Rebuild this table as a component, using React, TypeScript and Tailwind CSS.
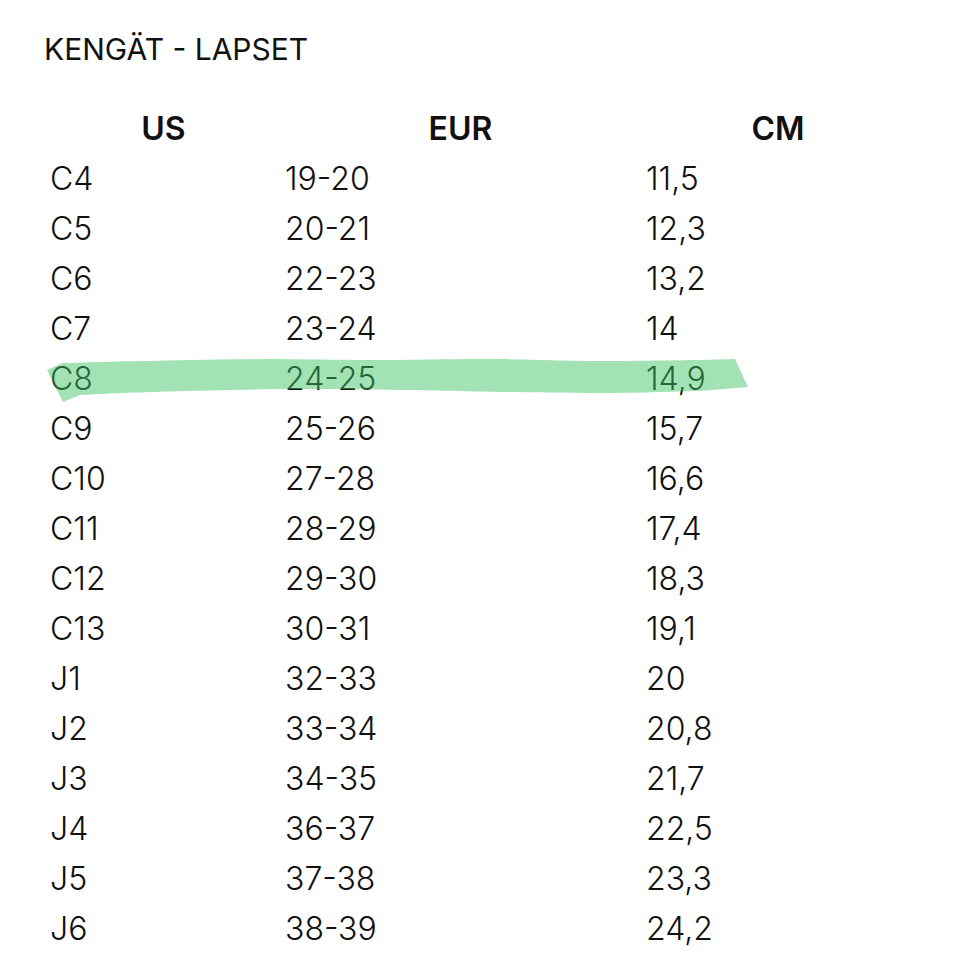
const rows: [string, string, string][] = [
  ["C4", "19-20", "11,5"],
  ["C5", "20-21", "12,3"],
  ["C6", "22-23", "13,2"],
  ["C7", "23-24", "14"],
  ["C8", "24-25", "14,9"],
  ["C9", "25-26", "15,7"],
  ["C10", "27-28", "16,6"],
  ["C11", "28-29", "17,4"],
  ["C12", "29-30", "18,3"],
  ["C13", "30-31", "19,1"],
  ["J1", "32-33", "20"],
  ["J2", "33-34", "20,8"],
  ["J3", "34-35", "21,7"],
  ["J4", "36-37", "22,5"],
  ["J5", "37-38", "23,3"],
  ["J6", "38-39", "24,2"],
];

const App = () => {
  return (
    <div className="relative w-[960px] h-[972px] bg-white text-[#111] overflow-hidden font-['Inter',sans-serif]">
      {/* Title */}
      <div className="pl-[44px] pt-[31px] text-[30px] leading-[36px] font-normal">
        KENGÄT - LAPSET
      </div>

      {/* Table */}
      <div className="pl-[50px] pt-[37px]">
        <div className="grid grid-cols-[235px_361px_264px] h-[50px] items-center text-[32px] font-semibold">
          <div className="text-center pr-[8px]">US</div>
          <div className="text-center pr-[10px]">EUR</div>
          <div className="text-center">CM</div>
        </div>
        {rows.map(([us, eur, cm]) => (
          <div
            key={us}
            className="grid grid-cols-[235px_361px_264px] h-[50px] items-center text-[32px] font-light"
          >
            <div>{us}</div>
            <div>{eur}</div>
            <div>{cm}</div>
          </div>
        ))}
      </div>

      {/* Highlighter stroke over the C8 row */}
      <svg
        className="absolute left-0 top-0 pointer-events-none"
        width="960"
        height="972"
        viewBox="0 0 960 972"
      >
        <path
          d="M47,370 L63,363 C100,362 130,361 150,361 C200,360 240,359 280,359 C340,360 380,360 400,360 C450,359 480,359 500,359 C550,360 580,361 600,361 C650,361 680,360 700,360 L735,359 L748,387 L700,391 C660,392 630,393 600,393 C560,393 530,392 500,392 C450,391 420,390 400,390 C340,389 300,389 280,389 C220,390 180,391 150,392 C120,393 95,394 80,395 L63,402 Z"
          fill="rgb(62,194,100)"
          fillOpacity="0.48"
        />
      </svg>
    </div>
  );
};

export default App;
